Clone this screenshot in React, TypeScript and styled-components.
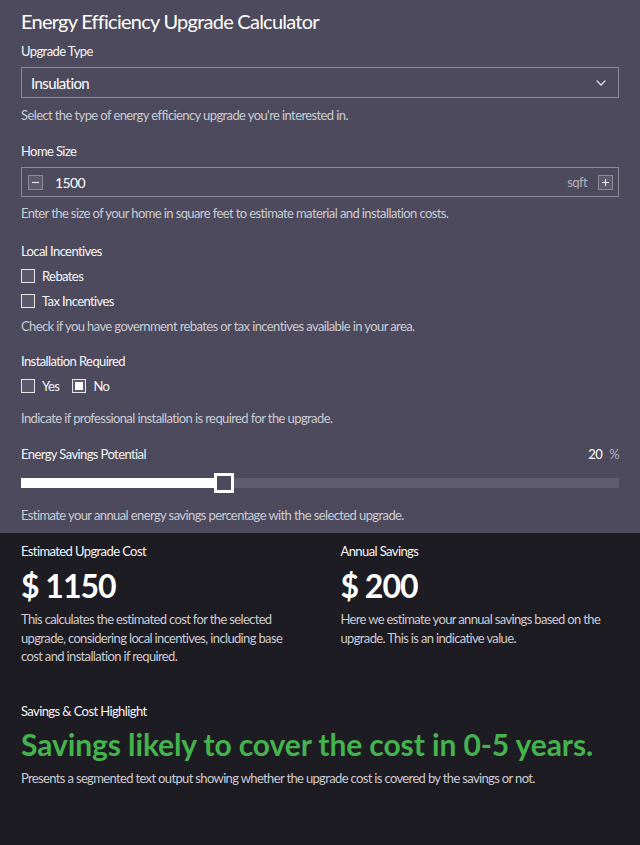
import React, { useState } from "react";
import styled, { createGlobalStyle } from "styled-components";
import { ChevronDown } from "lucide-react";

const GlobalStyle = createGlobalStyle`
  html, body {
    margin: 0;
    padding: 0;
    background: #1d1c22;
  }
  body {
    font-family: Lato, "Open Sans", sans-serif;
    -webkit-font-smoothing: antialiased;
  }
  #root {
    min-height: 100vh;
    display: flex;
    flex-direction: column;
  }
`;

const Page = styled.div`
  flex: 1;
  display: flex;
  flex-direction: column;
  color: #f4f4f6;
  letter-spacing: -0.6px;
`;

const Form = styled.section`
  background: #4c4a5c;
  padding: 9px 21px 10px;
  display: flex;
  flex-direction: column;
`;

const Title = styled.h1`
  margin: 0 0 10px;
  font-size: 20px;
  line-height: 24px;
  font-weight: 400;
  letter-spacing: -0.75px;
  color: #ffffff;
`;

const Group = styled.div<{ $after?: number }>`
  display: flex;
  flex-direction: column;
  margin-bottom: ${({ $after }) => $after ?? 20}px;
`;

const Label = styled.div<{ $gap?: number }>`
  font-size: 13px;
  line-height: 16px;
  color: #f6f6f8;
  margin-bottom: ${({ $gap }) => $gap ?? 8}px;
`;

const Helper = styled.p<{ $gap?: number }>`
  margin: ${({ $gap }) => $gap ?? 9}px 0 0;
  font-size: 13px;
  line-height: 16px;
  color: #cbcad3;
`;

const SelectBox = styled.div`
  height: 31px;
  box-sizing: border-box;
  border: 1.5px solid #8b8a98;
  display: flex;
  align-items: center;
  justify-content: space-between;
  padding: 0 9px 0 9px;
  font-size: 15px;
  color: #ffffff;
  svg {
    color: #dcdce2;
  }
`;

const NumberBox = styled.div`
  height: 30px;
  box-sizing: border-box;
  border: 1.5px solid #8b8a98;
  display: flex;
  align-items: center;
  padding: 0 5px 0 6px;
  font-size: 14px;
  color: #ffffff;
`;

const StepButton = styled.button`
  width: 15px;
  height: 15px;
  padding: 0;
  box-sizing: border-box;
  border: 1px solid #8b8a98;
  background: #5d5b6d;
  color: #e2e2e8;
  display: flex;
  align-items: center;
  justify-content: center;
  cursor: pointer;
`;

const NumberValue = styled.span`
  flex: 1;
  margin-left: 12px;
`;

const Unit = styled.span`
  color: #b4b3bd;
  font-size: 13px;
  margin-right: 11px;
`;

const CheckList = styled.div<{ $row?: boolean }>`
  display: flex;
  flex-direction: ${({ $row }) => ($row ? "row" : "column")};
  gap: ${({ $row }) => ($row ? "13px" : "5px")};
`;

const CheckRow = styled.label`
  display: flex;
  align-items: center;
  height: 20px;
  gap: 7px;
  font-size: 13px;
  color: #f6f6f8;
  cursor: pointer;
`;

const Box = styled.span<{ $checked?: boolean }>`
  width: 14px;
  height: 14px;
  box-sizing: border-box;
  border: 1.5px solid #e6e6ea;
  background: #5b5969;
  display: flex;
  align-items: center;
  justify-content: center;
  &::after {
    content: "";
    display: ${({ $checked }) => ($checked ? "block" : "none")};
    width: 8px;
    height: 8px;
    background: #ffffff;
  }
`;

const SliderHead = styled.div`
  display: flex;
  justify-content: space-between;
  align-items: center;
  font-size: 13px;
  line-height: 16px;
  margin-bottom: 11px;
`;

const SliderValue = styled.span`
  color: #ffffff;
  span {
    color: #b4b3bd;
    margin-left: 7px;
  }
`;

const Track = styled.div`
  position: relative;
  height: 10px;
  margin: 5px 0;
  background: #5e5c6d;
`;

const Fill = styled.div`
  position: absolute;
  left: 0;
  top: 0;
  bottom: 0;
  background: #ffffff;
`;

const Thumb = styled.div`
  position: absolute;
  top: -5px;
  width: 20px;
  height: 20px;
  box-sizing: border-box;
  border: 3px solid #ffffff;
  background: #4c4a5c;
`;

const Results = styled.section`
  flex: 1;
  background: #1d1c22;
  padding: 10px 21px 20px;
`;

const ResultGrid = styled.div`
  display: grid;
  grid-template-columns: 1fr 1fr;
  column-gap: 41px;
`;

const ResultCard = styled.div`
  display: flex;
  flex-direction: column;
`;

const ResultLabel = styled.div`
  font-size: 13px;
  line-height: 16px;
  color: #f6f6f8;
`;

const Amount = styled.div`
  font-size: 32px;
  line-height: 38px;
  font-weight: 700;
  letter-spacing: -1px;
  color: #ffffff;
  margin: 8px 0 5px;
`;

const ResultText = styled.p`
  margin: 0;
  font-size: 13px;
  line-height: 18.5px;
  letter-spacing: -0.65px;
  color: #cbcad3;
`;

const Highlight = styled.div`
  margin-top: 37px;
`;

const Verdict = styled.div`
  font-size: 30px;
  line-height: 36px;
  font-weight: 700;
  letter-spacing: -0.1px;
  color: #45b34d;
  margin: 7px 0 7px;
`;

const Minus = () => (
  <svg width="9" height="9" viewBox="0 0 9 9">
    <path d="M1 4.5h7" stroke="currentColor" strokeWidth="1.2" />
  </svg>
);

const Plus = () => (
  <svg width="9" height="9" viewBox="0 0 9 9">
    <path d="M1 4.5h7M4.5 1v7" stroke="currentColor" strokeWidth="1.2" />
  </svg>
);

const Check: React.FC<{ label: string; checked?: boolean; onToggle: () => void }> = ({
  label,
  checked,
  onToggle,
}) => (
  <CheckRow onClick={onToggle}>
    <Box $checked={checked} />
    {label}
  </CheckRow>
);

export default function App() {
  const [size, setSize] = useState(1500);
  const [rebates, setRebates] = useState(false);
  const [tax, setTax] = useState(false);
  const [install, setInstall] = useState(false);
  const savings = 20;
  const max = 60;
  const ratio = savings / max;

  return (
    <Page>
      <GlobalStyle />
      <Form>
        <Title>Energy Efficiency Upgrade Calculator</Title>

        <Group>
          <Label>Upgrade Type</Label>
          <SelectBox>
            Insulation
            <ChevronDown size={16} strokeWidth={2} />
          </SelectBox>
          <Helper>Select the type of energy efficiency upgrade you're interested in.</Helper>
        </Group>

        <Group $after={22}>
          <Label>Home Size</Label>
          <NumberBox>
            <StepButton onClick={() => setSize(size - 100)}>
              <Minus />
            </StepButton>
            <NumberValue>{size}</NumberValue>
            <Unit>sqft</Unit>
            <StepButton onClick={() => setSize(size + 100)}>
              <Plus />
            </StepButton>
          </NumberBox>
          <Helper $gap={8}>
            Enter the size of your home in square feet to estimate material and installation costs.
          </Helper>
        </Group>

        <Group $after={19}>
          <Label $gap={7}>Local Incentives</Label>
          <CheckList>
            <Check label="Rebates" checked={rebates} onToggle={() => setRebates(!rebates)} />
            <Check label="Tax Incentives" checked={tax} onToggle={() => setTax(!tax)} />
          </CheckList>
          <Helper $gap={7}>
            Check if you have government rebates or tax incentives available in your area.
          </Helper>
        </Group>

        <Group $after={20}>
          <Label $gap={7}>Installation Required</Label>
          <CheckList $row>
            <Check label="Yes" checked={install} onToggle={() => setInstall(true)} />
            <Check label="No" checked={!install} onToggle={() => setInstall(false)} />
          </CheckList>
          <Helper $gap={14}>Indicate if professional installation is required for the upgrade.</Helper>
        </Group>

        <Group $after={0}>
          <SliderHead>
            <span>Energy Savings Potential</span>
            <SliderValue>
              {savings}
              <span>%</span>
            </SliderValue>
          </SliderHead>
          <Track>
            <Fill style={{ width: `calc((100% - 20px) * ${ratio} + 10px)` }} />
            <Thumb style={{ left: `calc((100% - 20px) * ${ratio})` }} />
          </Track>
          <Helper $gap={14}>Estimate your annual energy savings percentage with the selected upgrade.</Helper>
        </Group>
      </Form>

      <Results>
        <ResultGrid>
          <ResultCard>
            <ResultLabel>Estimated Upgrade Cost</ResultLabel>
            <Amount>$ 1150</Amount>
            <ResultText>
              This calculates the estimated cost for the selected upgrade, considering local
              incentives, including base cost and installation if required.
            </ResultText>
          </ResultCard>
          <ResultCard>
            <ResultLabel>Annual Savings</ResultLabel>
            <Amount>$ 200</Amount>
            <ResultText>
              Here we estimate your annual savings based on the upgrade. This is an indicative
              value.
            </ResultText>
          </ResultCard>
        </ResultGrid>

        <Highlight>
          <ResultLabel>Savings &amp; Cost Highlight</ResultLabel>
          <Verdict>Savings likely to cover the cost in 0-5 years.</Verdict>
          <ResultText>
            Presents a segmented text output showing whether the upgrade cost is covered by the
            savings or not.
          </ResultText>
        </Highlight>
      </Results>
    </Page>
  );
}
